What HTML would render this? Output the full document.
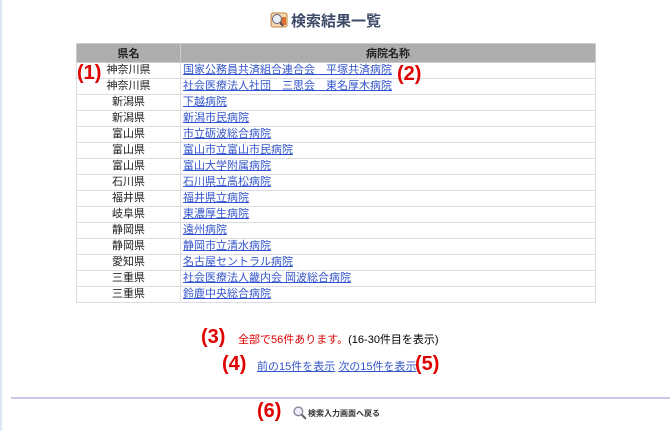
<!DOCTYPE html>
<html><head><meta charset="utf-8"><style>
body{margin:0;width:670px;height:431px;background:#fff;font-family:"Liberation Sans","Noto Sans CJK JP",sans-serif;position:relative;overflow:hidden}
.vl{position:absolute;left:0;top:0;width:2px;height:431px;background:#dde6f3}
h1{position:absolute;left:270px;top:10px;margin:0;font-size:15px;font-weight:bold;color:#3c4a68;white-space:nowrap}
.ic{display:inline-block;width:18px;height:16px;vertical-align:-2px;margin-right:3px}
table{position:absolute;left:76px;top:43px;width:520px;border-collapse:collapse;font-size:11px}
th{background:#adadad;color:#222;height:18px;padding:0;border:1px solid #ccc;font-weight:bold}
td{height:15px;padding:0;border:1px solid #ddd;line-height:15px}
td.p{text-align:center;width:103px;color:#222}
td a{color:#3355cc;text-decoration:underline;padding-left:2px}
.r{position:absolute;color:#e00000;font-weight:bold;font-size:20px;line-height:22px}
.t{position:absolute;font-size:11px;white-space:nowrap}
a{color:#3355cc}
.hr{position:absolute;left:11px;right:0;top:397px;height:2px;background:#c8c8ec}
</style></head><body>
<div class="vl"></div>
<h1><svg class="ic" viewBox="0 0 18 16"><rect x="1" y="1" width="16" height="14" rx="2" fill="#f4d9b0" stroke="#c08040"/><rect x="10" y="5" width="6" height="8" fill="#e07030"/><circle cx="7" cy="7" r="4.5" fill="#e8eef8" stroke="#667"/><line x1="10" y1="10" x2="13" y2="14" stroke="#555" stroke-width="2"/></svg>検索結果一覧</h1>
<table>
<tr><th>県名</th><th>病院名称</th></tr>
<tr><td class="p">神奈川県</td><td><a>国家公務員共済組合連合会　平塚共済病院</a></td></tr>
<tr><td class="p">神奈川県</td><td><a>社会医療法人社団　三思会　東名厚木病院</a></td></tr>
<tr><td class="p">新潟県</td><td><a>下越病院</a></td></tr>
<tr><td class="p">新潟県</td><td><a>新潟市民病院</a></td></tr>
<tr><td class="p">富山県</td><td><a>市立砺波総合病院</a></td></tr>
<tr><td class="p">富山県</td><td><a>富山市立富山市民病院</a></td></tr>
<tr><td class="p">富山県</td><td><a>富山大学附属病院</a></td></tr>
<tr><td class="p">石川県</td><td><a>石川県立高松病院</a></td></tr>
<tr><td class="p">福井県</td><td><a>福井県立病院</a></td></tr>
<tr><td class="p">岐阜県</td><td><a>東濃厚生病院</a></td></tr>
<tr><td class="p">静岡県</td><td><a>遠州病院</a></td></tr>
<tr><td class="p">静岡県</td><td><a>静岡市立清水病院</a></td></tr>
<tr><td class="p">愛知県</td><td><a>名古屋セントラル病院</a></td></tr>
<tr><td class="p">三重県</td><td><a>社会医療法人畿内会 岡波総合病院</a></td></tr>
<tr><td class="p">三重県</td><td><a>鈴鹿中央総合病院</a></td></tr>
</table>
<div class="r" style="left:77px;top:62px">(1)</div>
<div class="r" style="left:397px;top:63px">(2)</div>
<div class="r" style="left:201px;top:326px">(3)</div>
<div class="t" style="left:238px;top:331px"><span style="color:#e00000">全部で56件あります。</span>(16-30件目を表示)</div>
<div class="r" style="left:222px;top:353px">(4)</div>
<div class="t" style="left:257px;top:358px"><a style="text-decoration:underline">前の15件を表示</a> <a style="text-decoration:underline">次の15件を表示</a></div>
<div class="r" style="left:415px;top:353px">(5)</div>
<div class="hr"></div>
<div class="r" style="left:257px;top:400px">(6)</div>
<div class="t" style="left:293px;top:406px;font-size:8px;font-weight:bold;color:#333"><svg width="14" height="14" viewBox="0 0 13 13" style="vertical-align:-4px;margin-right:1px"><circle cx="5" cy="5" r="4" fill="#eef" stroke="#889" stroke-width="1.3"/><line x1="8" y1="8" x2="12" y2="12" stroke="#666" stroke-width="2"/></svg>検索入力画面へ戻る</div>
</body></html>
